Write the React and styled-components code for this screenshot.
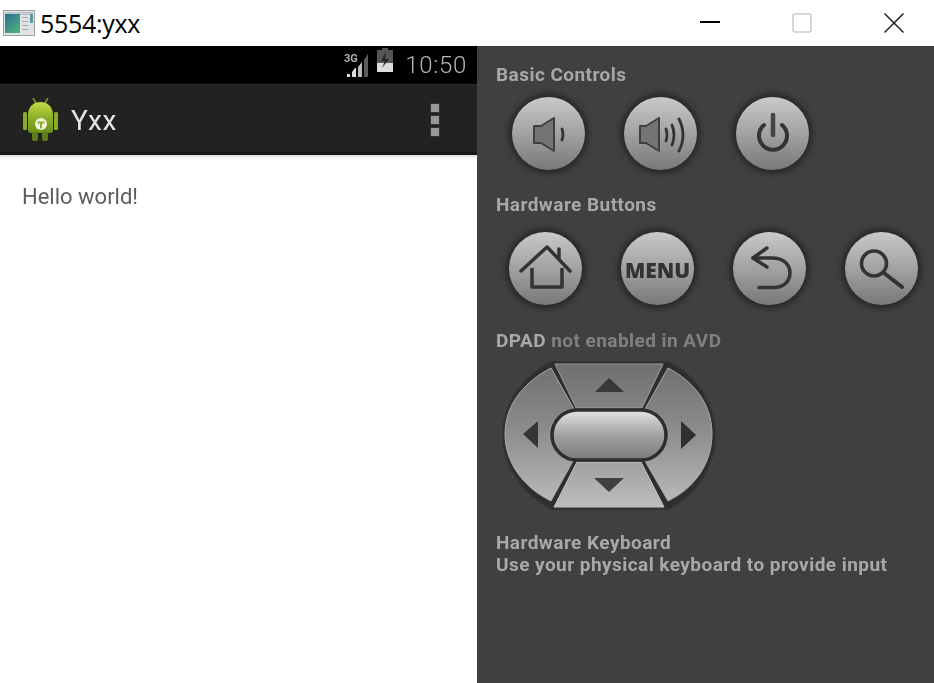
import React from "react";
import styled, { createGlobalStyle } from "styled-components";

const GlobalStyle = createGlobalStyle`
  html, body {
    margin: 0;
    padding: 0;
    background: #fff;
  }
`;

const Window = styled.div`
  width: 934px;
  height: 683px;
  display: flex;
  flex-direction: column;
  overflow: hidden;
  font-family: Roboto, "Liberation Sans", sans-serif;
`;

const TitleBar = styled.header`
  height: 46px;
  flex: none;
  display: flex;
  align-items: center;
  background: #fff;
  padding: 0 30px 0 3px;
`;

const TitleText = styled.span`
  margin-left: 5px;
  font-family: "Open Sans", "Liberation Sans", sans-serif;
  font-size: 25px;
  letter-spacing: -0.3px;
  color: #000;
`;

const WindowButtons = styled.div`
  margin-left: auto;
  display: flex;
  gap: 72px;
  align-items: center;
`;

const Body = styled.div`
  flex: 1;
  display: flex;
  min-height: 0;
`;

const Device = styled.main`
  width: 477px;
  flex: none;
  display: flex;
  flex-direction: column;
  background: #fff;
`;

const StatusBar = styled.div`
  height: 38px;
  flex: none;
  background: #000;
  display: flex;
  align-items: center;
  justify-content: flex-end;
  padding-right: 10px;
`;

const StatusIcon = styled.svg`
  display: block;
  flex: none;
  margin-right: ${(p) => p.$gap}px;
  margin-bottom: ${(p) => p.$lift}px;
  filter: blur(0.5px);
`;

const Clock = styled.span`
  font-size: 24px;
  font-weight: 300;
  letter-spacing: 0.7px;
  color: #b4b4b4;
  line-height: 38px;
  filter: blur(0.3px);
`;

const ActionBar = styled.div`
  height: 71px;
  flex: none;
  box-sizing: border-box;
  display: flex;
  align-items: center;
  background: #222;
  border-top: 1px solid #2d2d2d;
  border-bottom: 3px solid #171717;
  padding: 2px 38px 0 22px;
  box-shadow: 0 2px 3px rgba(60, 40, 60, 0.18);
`;

const DroidGraphic = styled.svg`
  display: block;
  flex: none;
  filter: blur(0.6px);
`;

const AppName = styled.span`
  margin: 2px 0 0 13px;
  font-size: 28px;
  letter-spacing: 0.6px;
  color: #e6e6e6;
  filter: blur(0.3px);
`;

const OverflowMenu = styled.div`
  margin-left: auto;
  display: flex;
  flex-direction: column;
  gap: 4px;
`;

const OverflowDot = styled.span`
  width: 8px;
  height: 8px;
  background: #989898;
  box-shadow: 0 0 0 1px #333;
`;

const Content = styled.div`
  flex: 1;
  padding: 28px 22px;
`;

const HelloText = styled.p`
  margin: 0;
  font-size: 22px;
  line-height: 28px;
  color: #5c5c5c;
  filter: blur(0.4px);
`;

const Controls = styled.aside`
  flex: 1;
  background: #404040;
  box-sizing: border-box;
  padding: 17px 0 0 19px;
  display: flex;
  flex-direction: column;
`;

const SectionLabel = styled.div`
  font-size: 19px;
  font-weight: 700;
  line-height: 24px;
  letter-spacing: 0.45px;
  color: #a8a8a8;
  filter: blur(0.4px);
`;

const Dim = styled.span`
  color: #808080;
`;

const ButtonRow = styled.div`
  display: flex;
  gap: 39px;
  padding-left: ${(p) => p.$inset}px;
  margin: ${(p) => p.$top}px 0 ${(p) => p.$bottom}px;
`;

const RoundButton = styled.button`
  width: 73px;
  height: 73px;
  flex: none;
  padding: 0;
  border: none;
  border-radius: 50%;
  display: flex;
  align-items: center;
  justify-content: center;
  background: linear-gradient(#c9c9c9, #a6a6a6 45%, #787878);
  box-shadow: 0 0 0 1px #2c2c2c, 0 0 5px 4px rgba(28, 28, 28, 0.6);

  svg {
    display: block;
    filter: blur(0.5px);
  }
`;

const MenuLabel = styled.span`
  margin-top: 3px;
  font-family: "Open Sans", "Liberation Sans", sans-serif;
  font-size: 21px;
  font-weight: 800;
  color: #333;
  filter: blur(0.4px);
`;

const DpadWrap = styled.div`
  margin: 6px 0 0 2px;
  height: 170px;

  svg {
    display: block;
    filter: blur(0.4px);
  }
`;

const KeyboardNote = styled.div`
  margin-top: 3px;
  font-size: 19px;
  font-weight: 700;
  line-height: 22px;
  letter-spacing: 0.45px;
  color: #a8a8a8;
  filter: blur(0.4px);
`;

const iconStroke = { fill: "none", stroke: "#333", strokeLinecap: "round", strokeLinejoin: "round" };

function AppWindowIcon() {
  return (
    <svg width="32" height="26" viewBox="0 0 32 26">
      <defs>
        <linearGradient id="winScreen" x1="0" y1="0" x2="0.7" y2="1">
          <stop offset="0" stopColor="#2a6f90" />
          <stop offset="1" stopColor="#4fae7c" />
        </linearGradient>
      </defs>
      <rect x="0.5" y="0.5" width="31" height="25" fill="#dfe3e6" stroke="#9aa0a4" />
      <rect x="2" y="2" width="28" height="3" fill="#bfc6cb" />
      <rect x="2" y="4" width="15" height="19" fill="url(#winScreen)" />
      <rect x="19" y="7" width="6" height="1" fill="#aaa" />
      <rect x="19" y="11" width="6" height="1" fill="#aaa" />
      <rect x="19" y="15" width="6" height="1" fill="#aaa" />
      <rect x="19" y="19" width="6" height="1" fill="#aaa" />
      <rect x="27" y="4" width="3" height="9" fill="#5d9aa0" />
    </svg>
  );
}

function MinimizeIcon() {
  return (
    <svg width="20" height="20" viewBox="0 0 20 20">
      <rect x="0" y="8" width="20" height="2" fill="#000" />
    </svg>
  );
}

function MaximizeIcon() {
  return (
    <svg width="20" height="20" viewBox="0 0 20 20">
      <rect x="1" y="1" width="18" height="18" rx="2" fill="none" stroke="#ccc" strokeWidth="1.6" />
    </svg>
  );
}

function CloseIcon() {
  return (
    <svg width="20" height="20" viewBox="0 0 20 20">
      <path d="M0.5 0.5 L19.5 19.5 M19.5 0.5 L0.5 19.5" stroke="#222" strokeWidth="1.5" fill="none" />
    </svg>
  );
}

function SignalIcon() {
  return (
    <StatusIcon $gap={8} $lift={0} width="25" height="26" viewBox="0 0 25 26">
      <text x="0" y="10" fontSize="11" fontWeight="700" fontFamily="Roboto, sans-serif" fill="#b0b0b0">3G</text>
      <path d="M3 25h3v-3h-3z" fill="#ddd" />
      <path d="M8 25h4v-9h-1l-3 4z" fill="#ddd" />
      <path d="M14 25h4V10l-4 5z" fill="#bbb" />
      <path d="M20 25h4V2l-4 6z" fill="#5c5c5c" />
    </StatusIcon>
  );
}

function BatteryIcon() {
  return (
    <StatusIcon $gap={12} $lift={10} width="16" height="24" viewBox="0 0 16 24">
      <rect x="5" y="0" width="6" height="2" fill="#555" />
      <rect x="0" y="2" width="16" height="22" fill="#555" />
      <path d="M0 15h16v9H0z" fill="#ddd" />
      <path d="M9 4 L4 13 H8 L5 20 L12 11 H8 Z" fill="#222" />
    </StatusIcon>
  );
}

function AndroidIcon() {
  return (
    <DroidGraphic width="36" height="44" viewBox="0 0 36 44">
      <defs>
        <linearGradient id="droid" x1="0" y1="0" x2="0" y2="1">
          <stop offset="0" stopColor="#c0dc45" />
          <stop offset="0.5" stopColor="#8fb02a" />
          <stop offset="1" stopColor="#6c9018" />
        </linearGradient>
      </defs>
      <path d="M11 0l3 5M26 0l-3 5" stroke="#7d9e22" strokeWidth="1.5" />
      <path d="M6 17 C6 8 12 4 18.500 4 C25 4 31 8 31 17 V32 a3 3 0 0 1-3 3 H9 a3 3 0 0 1-3-3 Z" fill="url(#droid)" />
      <rect x="1" y="14" width="4" height="18" rx="1.5" fill="#8aad28" />
      <rect x="32" y="14" width="4" height="18" rx="1.5" fill="#8aad28" />
      <rect x="10" y="34" width="6" height="9" rx="2" fill="#5c7d18" />
      <rect x="20" y="34" width="6" height="9" rx="2" fill="#5c7d18" />
      <circle cx="19" cy="26" r="6" fill="#f1f3e0" />
      <path d="M15.500 23.500h7v2h-2.500v5h-2v-5h-2.500z" fill="#8aad28" />
    </DroidGraphic>
  );
}

function VolumeDownIcon() {
  return (
    <svg width="40" height="40" viewBox="0 0 40 40">
      <path d="M5 12h7l13-8v33l-13-8H5z" fill="#747474" stroke="#3f3f3f" strokeWidth="2" strokeLinejoin="round" />
      <path d="M33 15q2 5.500 0 11" {...iconStroke} strokeWidth="2.800" />
    </svg>
  );
}

function VolumeUpIcon() {
  return (
    <svg width="50" height="40" viewBox="0 0 50 40">
      <path d="M4 12h6l13-8v33l-13-8H4z" fill="#747474" stroke="#3f3f3f" strokeWidth="2" strokeLinejoin="round" />
      <path d="M30 15q2 6 0 12M36 11q4 10 0 20M43 5q8 16 0 32" {...iconStroke} strokeWidth="2.800" />
    </svg>
  );
}

function PowerIcon() {
  return (
    <svg width="40" height="44" viewBox="0 0 40 44">
      <path d="M11 13a14 14 0 1 0 18 0" {...iconStroke} strokeWidth="4" />
      <path d="M20 3v20" {...iconStroke} strokeWidth="4.500" stroke="#444" />
    </svg>
  );
}

function HomeIcon() {
  return (
    <svg width="54" height="48" viewBox="0 0 54 48">
      <path d="M2 26 L28 2 L51 26" {...iconStroke} strokeWidth="3.500" />
      <path d="M40 13V4" {...iconStroke} strokeWidth="3.500" />
      <path d="M13 23V42H43V23" {...iconStroke} strokeWidth="3.500" strokeLinecap="butt" />
    </svg>
  );
}

function BackIcon() {
  return (
    <svg width="44" height="46" viewBox="0 0 44 46">
      <path d="M19 2L5 12l14 9" {...iconStroke} strokeWidth="3.500" />
      <path d="M5 12H24C36 12 42 19 42 27C42 35 36 41.500 26 41.500H11" {...iconStroke} strokeWidth="3.500" />
    </svg>
  );
}

function SearchIcon() {
  return (
    <svg width="46" height="46" viewBox="0 0 46 46">
      <circle cx="15" cy="17.500" r="12.500" {...iconStroke} strokeWidth="3.600" />
      <path d="M25 27L43 41" {...iconStroke} strokeWidth="4" />
    </svg>
  );
}

function Dpad() {
  return (
    <svg width="226" height="170" viewBox="8 10 226 170">
      <defs>
        <linearGradient id="dpadFace" gradientUnits="userSpaceOnUse" x1="0" y1="15" x2="0" y2="158">
          <stop offset="0" stopColor="#6f6f6f" />
          <stop offset="0.5" stopColor="#8f8f8f" />
          <stop offset="1" stopColor="#bdbdbd" />
        </linearGradient>
        <linearGradient id="dpadPill" x1="0" y1="0" x2="0" y2="1">
          <stop offset="0" stopColor="#e4e4e4" />
          <stop offset="0.5" stopColor="#a2a2a2" />
          <stop offset="1" stopColor="#7a7a7a" />
        </linearGradient>
      </defs>
      <path
        d="M62 13 H178 C206 26 225 54 225 86 C225 118 206 146 178 160 H62 C34 146 13 118 13 86 C13 54 34 26 62 13 Z"
        fill="#2e2e2e"
        stroke="#333"
        strokeWidth="2"
      />
      <path d="M61 19 L84 60 C68 62 60 74 60 86 C60 98 68 108 83 112 L61 152 C36 140 15 116 15 85 C15 54 36 32 61 19 Z" fill="url(#dpadFace)" stroke="#a8a8a8" strokeWidth="1" />
      <path d="M65 15 H173 L152 59 H86 Z" fill="url(#dpadFace)" stroke="#9c9c9c" strokeWidth="1" />
      <path d="M87 113 H151 L174 158 H64 Z" fill="url(#dpadFace)" stroke="#c4c4c4" strokeWidth="1" />
      <path d="M178 19 L155 60 C170 62 178 74 178 86 C178 98 170 108 155 112 L178 152 C203 140 222 116 222 85 C222 54 203 32 178 19 Z" fill="url(#dpadFace)" stroke="#a8a8a8" strokeWidth="1" />
      <rect x="62" y="61" width="114" height="50" rx="25" fill="url(#dpadPill)" stroke="#2e2e2e" strokeWidth="3.500" />
      <path d="M105 43 L119 29 L134 43 Z" fill="#383838" />
      <path d="M104 129 H134 L119 143 Z" fill="#404040" />
      <path d="M48 72 V99 L33 85 Z" fill="#353535" />
      <path d="M191 72 V100 L206 86 Z" fill="#2f2f2f" />
    </svg>
  );
}

export default function App() {
  return (
    <Window>
      <GlobalStyle />
      <TitleBar>
        <AppWindowIcon />
        <TitleText>5554:yxx</TitleText>
        <WindowButtons>
          <MinimizeIcon />
          <MaximizeIcon />
          <CloseIcon />
        </WindowButtons>
      </TitleBar>
      <Body>
        <Device>
          <StatusBar>
            <SignalIcon />
            <BatteryIcon />
            <Clock>10:50</Clock>
          </StatusBar>
          <ActionBar>
            <AndroidIcon />
            <AppName>Yxx</AppName>
            <OverflowMenu>
              <OverflowDot />
              <OverflowDot />
              <OverflowDot />
            </OverflowMenu>
          </ActionBar>
          <Content>
            <HelloText>Hello world!</HelloText>
          </Content>
        </Device>
        <Controls>
          <SectionLabel>Basic Controls</SectionLabel>
          <ButtonRow $inset={16} $top={10} $bottom={23}>
            <RoundButton aria-label="Volume down"><VolumeDownIcon /></RoundButton>
            <RoundButton aria-label="Volume up"><VolumeUpIcon /></RoundButton>
            <RoundButton aria-label="Power"><PowerIcon /></RoundButton>
          </ButtonRow>
          <SectionLabel>Hardware Buttons</SectionLabel>
          <ButtonRow $inset={13} $top={15} $bottom={24}>
            <RoundButton aria-label="Home"><HomeIcon /></RoundButton>
            <RoundButton aria-label="Menu"><MenuLabel>MENU</MenuLabel></RoundButton>
            <RoundButton aria-label="Back"><BackIcon /></RoundButton>
            <RoundButton aria-label="Search"><SearchIcon /></RoundButton>
          </ButtonRow>
          <SectionLabel>DPAD <Dim>not enabled in AVD</Dim></SectionLabel>
          <DpadWrap><Dpad /></DpadWrap>
          <KeyboardNote>
            Hardware Keyboard
            <br />
            Use your physical keyboard to provide input
          </KeyboardNote>
        </Controls>
      </Body>
    </Window>
  );
}
